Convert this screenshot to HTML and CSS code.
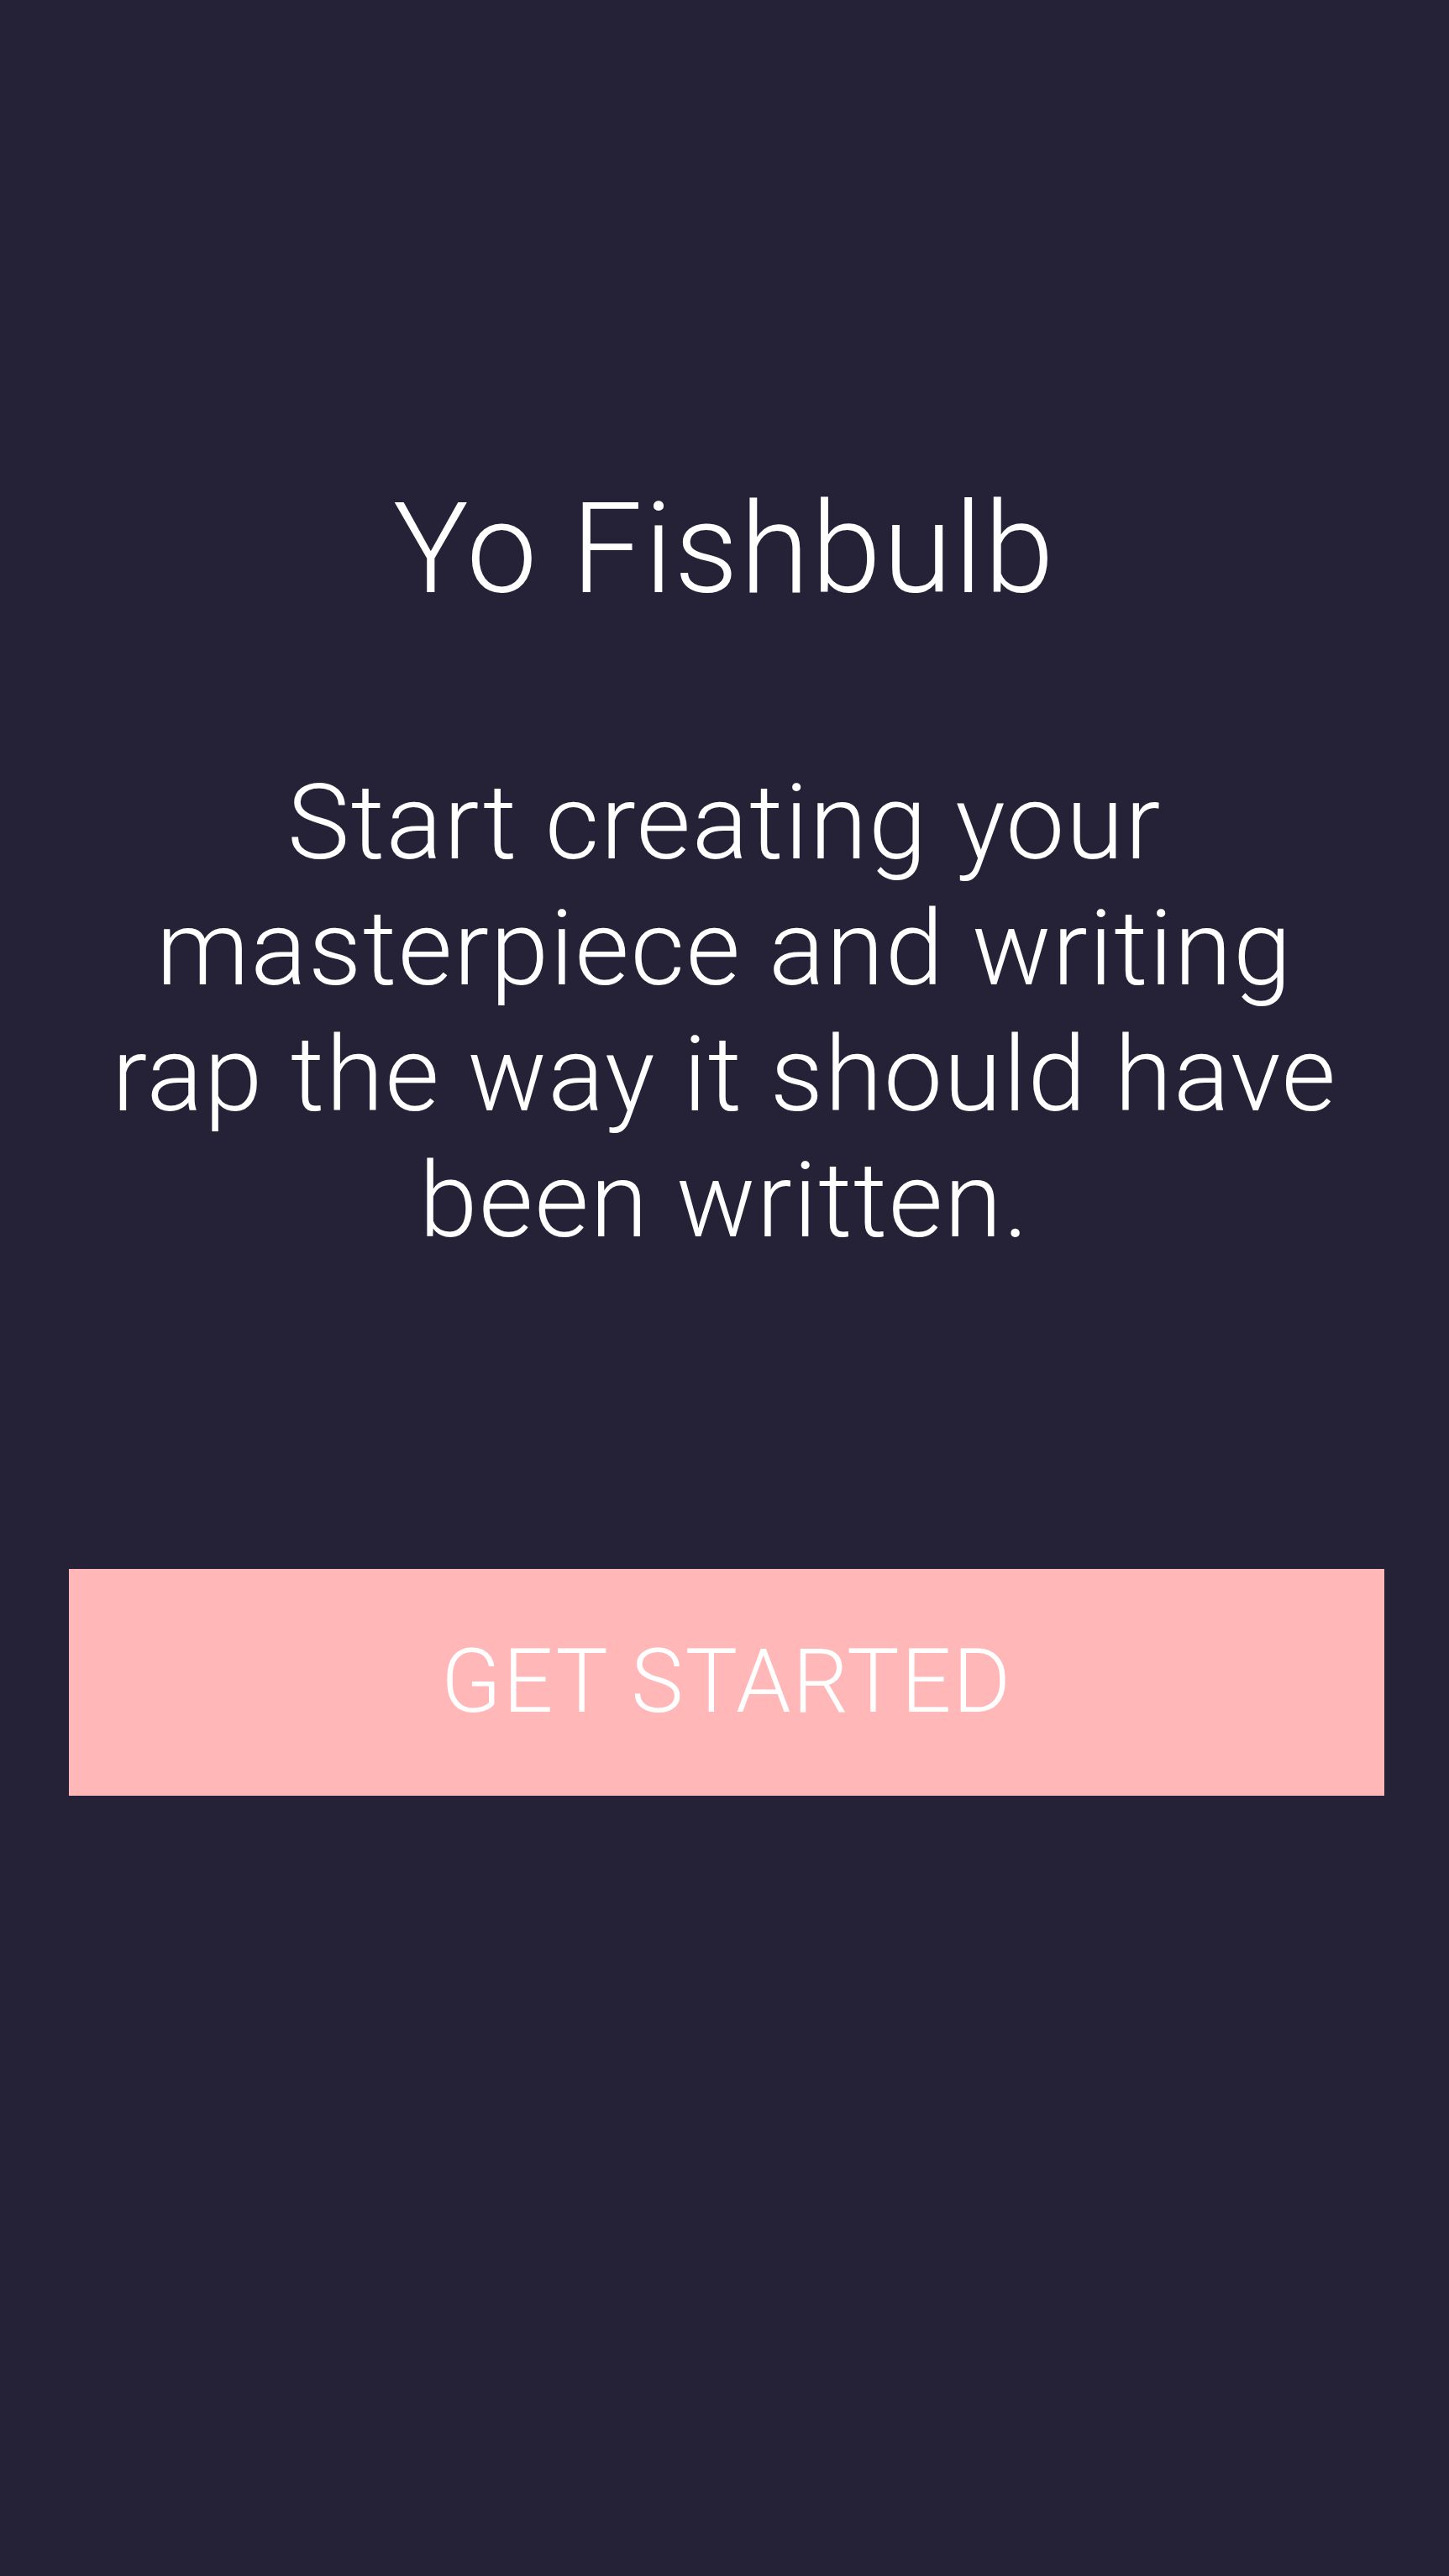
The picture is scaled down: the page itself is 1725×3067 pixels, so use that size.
FILE: index.html
```html
<!DOCTYPE html>
<html lang="en">
<head>
<meta charset="utf-8">
<title>Yo Fishbulb</title>
<link rel="stylesheet" href="styles.css">
</head>
<body>
<main class="screen">
  <h1 class="title">Yo Fishbulb</h1>
  <p class="lead">Start creating your<br>masterpiece and writing<br>rap the way it should have<br>been written.</p>
  <button class="cta" type="button">GET STARTED</button>
</main>
</body>
</html>
```
FILE: styles.css
```css
html, body {
  margin: 0;
  padding: 0;
  background: #252238;
}
.screen {
  width: 1725px;
  height: 3067px;
  display: flex;
  flex-direction: column;
  align-items: center;
  background: #252238;
  color: #ffffff;
  font-family: Roboto, "Liberation Sans", sans-serif;
  font-weight: 300;
}
.title {
  margin: 564px 0 0;
  font-size: 150px;
  line-height: 180px;
  font-weight: 300;
  letter-spacing: 2.2px;
  text-align: center;
  white-space: nowrap;
}
.lead {
  margin: 161px 0 0;
  font-size: 125px;
  line-height: 150px;
  letter-spacing: 1.6px;
  text-align: center;
  white-space: nowrap;
}
.cta {
  align-self: flex-start;
  margin: 363px 0 0 82px;
  width: 1566px;
  height: 270px;
  border: 0;
  padding: 0;
  background: #ffb7b7;
  color: #ffffff;
  font-family: Roboto, "Liberation Sans", sans-serif;
  font-weight: 300;
  font-size: 105px;
  line-height: 270px;
  letter-spacing: 1.9px;
  text-align: center;
}
```
